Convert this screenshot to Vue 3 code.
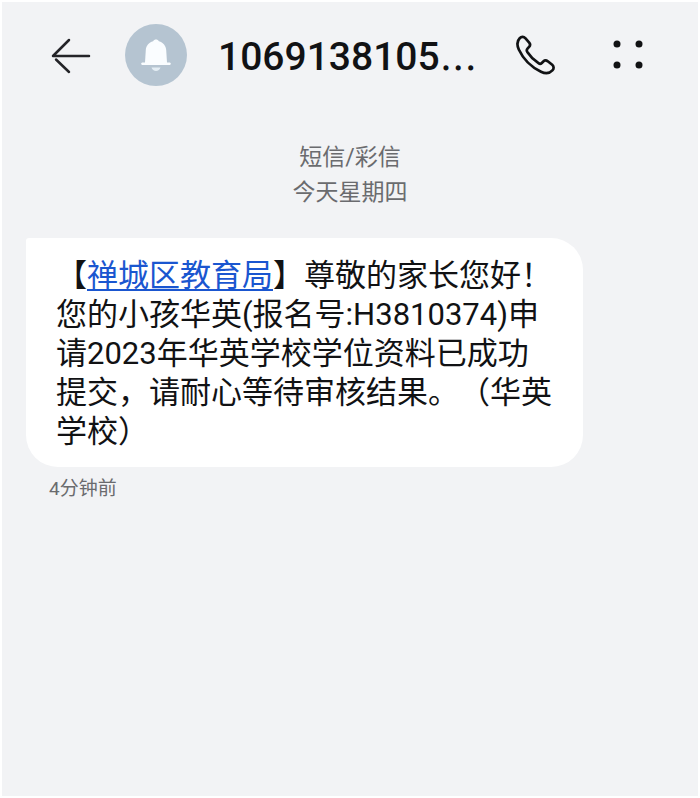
<script setup>
const sender = '1069138105'
const channel = '短信/彩信'
const day = '今天星期四'
const organisation = '禅城区教育局'
const received = '4分钟前'
</script>

<template>
  <div class="screen">
    <header class="bar">
      <button class="icon-button back" type="button" aria-label="返回">
        <svg width="40" height="38" viewBox="0 0 40 38" fill="none" stroke="#242428" stroke-width="2.5" stroke-linecap="round" stroke-linejoin="round">
          <path d="M38 20H2L18 4M5 23.500L18 36" />
        </svg>
      </button>
      <svg class="avatar" width="62" height="62" viewBox="0 0 62 62" aria-hidden="true">
        <circle cx="31" cy="31" r="31" fill="#b5c4d1" />
        <path d="M31 15.500c-1.300 0-2.200.7-2.900 1.700-4.300 1.300-7 4.300-7.300 8.800l-.8 12.500h-2.800c-1.400 0-1.400 2.500 0 2.500h27.600c1.400 0 1.400-2.500 0-2.500H42l-.8-12.500c-.3-4.500-3-7.500-7.300-8.800-.7-1-1.600-1.700-2.900-1.700z" fill="#fafdff" />
        <path d="M26.500 43.500h9c-.6 2.300-2.400 3.500-4.500 3.500s-3.900-1.200-4.500-3.500z" fill="#e3edf4" />
      </svg>
      <h1 class="sender">{{ sender }}<span class="more">...</span></h1>
      <button class="icon-button call" type="button" aria-label="拨打电话">
        <svg width="40" height="40" viewBox="0 0 40 40" fill="none" stroke="#111214" stroke-width="2.700" stroke-linejoin="round" stroke-linecap="round">
          <path d="M3.700 3.300C5.300 1.600 7.700 1.500 9.300 3.100L13.200 7.600C14.500 9.200 14.300 10.800 12.800 12.200L11.500 13.600C10.500 14.700 10.500 15.600 11.300 16.900C14.300 21.500 18.100 25.300 22.500 28.200C23.800 29.100 24.800 29 25.800 28L27.300 26.500C28.700 25.200 30.300 25.200 31.800 26.300L36.200 29.800C38 31.400 38 33.700 36.400 35.400C33.700 38.300 29.300 38.800 25 36.700C15.500 32.200 7.100 23.700 2.800 14.500C.9 10.300.8 6.300 3.700 3.300Z" />
        </svg>
      </button>
      <button class="icon-button menu" type="button" aria-label="更多选项">
        <svg width="32" height="30" viewBox="0 0 32 30" fill="#111214">
          <circle cx="5" cy="4" r="3.500" />
          <circle cx="27" cy="4" r="3.500" />
          <circle cx="5" cy="25" r="3.500" />
          <circle cx="27" cy="25" r="3.500" />
        </svg>
      </button>
    </header>

    <main class="thread">
      <div class="heading">
        <p>{{ channel }}</p>
        <p>{{ day }}</p>
      </div>
      <article class="message">
        <p class="bubble">【<a class="link" href="#">{{ organisation }}</a>】尊敬的家长您好！您的小孩华英(报名号:H3810374)申请2023年华英学校学位资料已成功提交，请耐心等待审核结果。（华英学校）</p>
        <time class="received">{{ received }}</time>
      </article>
    </main>
  </div>
</template>

<style>
body {
  margin: 0;
  background: #fff;
}
</style>

<style scoped>
.screen {
  box-sizing: border-box;
  min-height: 100vh;
  border: 2px solid #fff;
  background: #f2f3f5;
  color: #111214;
  font-family: Roboto, "Noto Sans CJK SC", sans-serif;
  text-spacing-trim: space-all;
}

.bar {
  display: flex;
  align-items: center;
  padding: 22px 54px 0 49px;
}

.icon-button {
  display: flex;
  flex: none;
  padding: 0;
  border: 0;
  background: none;
  cursor: pointer;
}

.avatar {
  flex: none;
  margin-left: 34px;
}

.sender {
  flex: 1;
  margin: 0 0 0 31px;
  padding-top: 4px;
  font-size: 39px;
  line-height: 48px;
  font-weight: 500;
  white-space: nowrap;
}

.more {
  font-family: "DejaVu Serif", serif;
  font-weight: 400;
}

.menu {
  margin-left: 56px;
}

.heading {
  padding-top: 54px;
  color: #6a6b6e;
  font-size: 23px;
  line-height: 35px;
  text-align: center;
}

.heading p {
  margin: 0;
}

.message {
  padding: 28px 24px 0;
}

.bubble {
  box-sizing: border-box;
  width: 86%;
  margin: 0;
  padding: 18px 31px 16px 30px;
  border-radius: 3px 32px 32px 32px;
  background: #fff;
  font-size: 31px;
  line-height: 39px;
}

.link {
  color: #1a56d0;
  text-decoration: underline;
  text-decoration-thickness: 2px;
  text-underline-offset: 3px;
}

.received {
  display: block;
  padding: 8px 23px;
  color: #6a6b6e;
  font-size: 19px;
  line-height: 28px;
}
</style>
